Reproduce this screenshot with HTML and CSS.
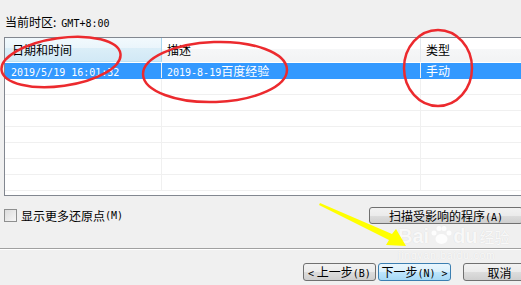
FILE: index.html
```html
<!DOCTYPE html>
<html lang="zh-CN">
<head>
    <meta charset="UTF-8">
    <title>系统还原</title>
    <link rel="stylesheet" href="styles.css">
</head>
<body>
    <div class="page">
        <div class="zone">当前时区:<span class="en gap">GMT+8:00</span></div>

        <div class="list">
            <div class="row head">
                <div class="cell c1 hot">日期和时间</div>
                <div class="cell c2">描述</div>
                <div class="cell c3">类型</div>
            </div>
            <div class="row selected">
                <div class="cell c1"><span class="en">2019/5/19 16:01:32</span></div>
                <div class="cell c2"><span class="en">2019-8-19</span>百度经验</div>
                <div class="cell c3">手动</div>
            </div>
            <div class="row"><div class="cell c1"></div><div class="cell c2"></div><div class="cell c3"></div></div>
            <div class="row"><div class="cell c1"></div><div class="cell c2"></div><div class="cell c3"></div></div>
            <div class="row"><div class="cell c1"></div><div class="cell c2"></div><div class="cell c3"></div></div>
            <div class="row"><div class="cell c1"></div><div class="cell c2"></div><div class="cell c3"></div></div>
            <div class="row"><div class="cell c1"></div><div class="cell c2"></div><div class="cell c3"></div></div>
            <div class="row"><div class="cell c1"></div><div class="cell c2"></div><div class="cell c3"></div></div>
            <div class="row"><div class="cell c1"></div><div class="cell c2"></div><div class="cell c3"></div></div>
        </div>

        <div class="options">
            <label class="check"><span class="box"></span>显示更多还原点<span class="en">(M)</span></label>
            <button class="btn scan">扫描受影响的程序<span class="en">(A)</span></button>
        </div>

        <div class="sep"></div>

        <div class="nav">
            <button class="btn prev"><span class="en">&lt;</span> 上一步<span class="en">(B)</span></button>
            <button class="btn next default">下一步<span class="en">(N) &gt;</span></button>
            <button class="btn cancel">取消</button>
        </div>
    </div>

    <!-- watermark -->
    <div class="mark">
        <span class="mark-logo">Bai<svg width="24" height="20" viewBox="0 0 24 20"><circle cx="5" cy="8" r="2.5"/><circle cx="10" cy="3.5" r="2.5"/><circle cx="15" cy="3.5" r="2.5"/><circle cx="20" cy="8" r="2.5"/><ellipse cx="12.5" cy="14" rx="6" ry="5"/></svg>du</span><span class="mark-cn">经验</span>
        <div class="mark-url">jingyan.baidu.com</div>
    </div>

    <!-- annotations drawn on top of the screenshot -->
    <svg class="notes" width="521" height="285" viewBox="0 0 521 285">
        <ellipse cx="61" cy="62" rx="60" ry="24" transform="rotate(-8 61 62)"/>
        <ellipse cx="215" cy="72" rx="72" ry="30" transform="rotate(-2 215 72)"/>
        <ellipse cx="438" cy="68" rx="34" ry="38"/>
        <polygon class="arrow" points="320,203 392,234 396,229 406,246 386,245 389,240 319,205"/>
    </svg>
</body>
</html>
```

FILE: styles.css
```css
html, body {
    margin: 0;
    overflow: hidden;
}

body {
    width: 521px;
    height: 285px;
    background-color: #f0f0f0;
    font-family: "Noto Sans CJK SC", sans-serif;
    font-size: 12px;
    color: #000;
    position: relative;
}

.en {
    font-family: "DejaVu Sans Mono", monospace;
    font-size: 10px;
}

.gap {
    margin-left: 5px;
}

.page {
    display: flex;
    flex-direction: column;
}

.zone {
    margin: 15px 0 0 5px;
    height: 14px;
    line-height: 14px;
}

/* list view */
.list {
    margin: 8px 0 0 4px;
    width: 540px;
    height: 157px;
    border: 1px solid #828790;
    border-right: none;
    background: #fff;
    overflow: hidden;
}

.row {
    display: flex;
    height: 15px;
    border-bottom: 1px solid #f0f0f0;
}

.cell {
    height: 100%;
    line-height: 15px;
    padding-left: 5px;
    box-sizing: border-box;
    white-space: nowrap;
    overflow: hidden;
}

.c1 {
    width: 157px;
    padding-left: 6px;
    border-right: 1px solid #f0f0f0;
}

.c2 {
    width: 259px;
    border-right: 1px solid #f0f0f0;
}

.c3 {
    flex: 1;
}

.row.head {
    height: 24px;
    border-bottom: 1px solid #fff;
    background: linear-gradient(#fff 0%, #fff 45%, #f6f7f8 45%, #f2f3f4 100%);
}

.row.head .cell {
    line-height: 24px;
    border-right-color: #e3e8ee;
}

.row.head .c1 {
    padding-left: 7px;
}

.row.head .hot {
    background: linear-gradient(#f2f9fd 0%, #eaf5fb 45%, #dbeef8 45%, #d2e9f6 100%);
    border-right-color: #a9d6ee;
    border-bottom: 1px solid #c0e2f3;
}

.row.selected {
    background: #3399ff;
    color: #fff;
    border-bottom-color: #3399ff;
}

.row.selected .cell {
    border-right-color: #f0f0f0;
}

/* options row */
.options {
    display: flex;
    align-items: center;
    margin-top: 11px;
    height: 17px;
}

.check {
    display: flex;
    align-items: center;
    margin-left: 4px;
}

.box {
    width: 11px;
    height: 11px;
    margin-right: 4px;
    border: 1px solid #8e8f8f;
    background: linear-gradient(135deg, #dcdcdc, #f6f6f6);
}

.btn {
    height: 17px;
    padding: 0;
    border: 1px solid #707070;
    border-radius: 3px;
    background: linear-gradient(#f2f2f2 0%, #ebebeb 50%, #dddddd 50%, #cfcfcf 100%);
    font-family: "Noto Sans CJK SC", sans-serif;
    font-size: 12px;
    line-height: 15px;
    color: #000;
    white-space: nowrap;
    box-sizing: border-box;
}

.scan {
    width: 154px;
    margin-left: auto;
    margin-right: -2px;
}

.sep {
    margin-top: 24px;
    height: 0;
    border-top: 1px solid #a0a0a0;
    border-bottom: 1px solid #fff;
}

.nav {
    display: flex;
    margin-top: 13px;
    padding-left: 303px;
}

.prev, .next, .cancel {
    width: 73px;
    height: 18px;
    flex: none;
}

.next {
    margin-left: 2px;
}

.default {
    border-color: #3c7fb1;
    background: linear-gradient(#eaf6fd 0%, #d9f0fc 50%, #bee6fd 50%, #a7d9f5 100%);
}

.cancel {
    margin-left: 12px;
}

/* baidu watermark */
.mark {
    position: absolute;
    left: 398px;
    top: 224px;
    color: rgba(255, 255, 255, 0.85);
    text-shadow: 0 0 1px rgba(0, 0, 0, 0.12);
    pointer-events: none;
}

.mark-logo {
    font-family: "Liberation Sans", sans-serif;
    font-size: 20px;
    font-weight: bold;
    line-height: 24px;
}

.mark-logo svg {
    fill: rgba(255, 255, 255, 0.85);
    vertical-align: -2px;
}

.mark-cn {
    font-size: 15px;
    margin-left: 2px;
}

.mark-url {
    font-family: "Liberation Sans", sans-serif;
    font-size: 10px;
    line-height: 12px;
    margin-top: 2px;
    letter-spacing: 1px;
}

/* red circles and arrow */
.notes {
    position: absolute;
    left: 0;
    top: 0;
    pointer-events: none;
}

.notes ellipse {
    fill: none;
    stroke: #ec2a2e;
    stroke-width: 2.5;
}

.notes .arrow {
    fill: #ffff00;
    stroke: none;
}
```
